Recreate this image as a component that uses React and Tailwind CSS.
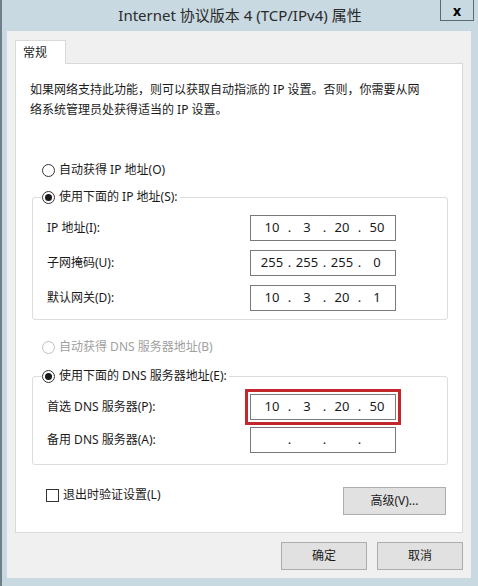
const FONT = { fontFamily: '"Noto Sans", "Noto Sans CJK SC", sans-serif' };

function Radio({ checked, disabled, label }) {
  return (
    <span className={`flex items-center gap-[4px] h-[20px] ${disabled ? 'text-[#a0a0a0]' : 'text-[#1a1a1a]'}`}>
      <span
        className={`flex h-[13px] w-[13px] items-center justify-center rounded-full border bg-white ${
          disabled ? 'border-[#c0c0c0]' : 'border-[#333]'
        }`}
      >
        {checked && <span className="h-[7px] w-[7px] rounded-full bg-[#1a1a1a]" />}
      </span>
      <span>{label}</span>
    </span>
  );
}

function IpInput({ parts, highlight }) {
  return (
    <div
      className={`flex h-[26px] w-[146px] items-center border border-[#7a7a7a] bg-white pl-[6px] text-[13px] text-[#1a1a1a] ${
        highlight ? 'outline-[3px] outline-offset-[2px] outline-solid outline-[#c1272d]' : ''
      }`}
    >
      {parts.map((p, i) => (
        <div key={i} className="flex items-center">
          {i > 0 && <span className="w-[5px] text-center">.</span>}
          <span className="w-[30px] text-center">{p}</span>
        </div>
      ))}
    </div>
  );
}

function Row({ label, parts, highlight, h }) {
  return (
    <div className={`flex items-center ${h}`}>
      <span className="w-[203px] text-[#1a1a1a]">{label}</span>
      <IpInput parts={parts} highlight={highlight} />
    </div>
  );
}

function Button({ children, w = 'w-[86px]' }) {
  return (
    <button
      type="button"
      className={`flex h-[28px] ${w} items-center justify-center border border-[#adadad] bg-[#e1e1e1] text-[12px] text-[#1a1a1a]`}
    >
      {children}
    </button>
  );
}

export default function App() {
  return (
    <div
      className="flex h-[586px] w-[478px] flex-col border-l-2 border-[#6f7f89] bg-[#c8d9e2] text-[12px]"
      style={FONT}
    >
      {/* title bar */}
      <div className="flex h-[31px] items-start">
        <div className="flex h-[31px] flex-1 items-center justify-center pl-[38px] text-[15px] text-[#2b2b2b]">
          Internet 协议版本 4 (TCP/IPv4) 属性
        </div>
        <div className="mr-[4px] flex h-[21px] w-[34px] items-center justify-center border border-t-0 border-[#5a6a74] text-[14px] font-bold text-black">
          x
        </div>
      </div>

      {/* client */}
      <div className="mb-[8px] ml-[5px] mr-[7px] flex flex-1 flex-col bg-[#f0f0f0] px-[8px] pt-[9px]">
        <div className="relative z-10 -mb-px flex h-[24px] w-[51px] items-center border border-b-0 border-[#d9d9d9] bg-white pl-[7px] text-[#1a1a1a]">
          常规
        </div>
        <div className="flex h-[470px] flex-col border border-[#d9d9d9] bg-white px-[14px] pt-[16px]">
          <p className="whitespace-nowrap leading-[20px] text-[#1a1a1a]">
            如果网络支持此功能，则可以获取自动指派的 IP 设置。否则，你需要从网
            <br />
            络系统管理员处获得适当的 IP 设置。
          </p>

          <div className="mt-[40px] pl-[12px]">
            <Radio label="自动获得 IP 地址(O)" />
          </div>

          <fieldset className="ml-[2px] mt-[7px] h-[133px] w-[416px] rounded-[3px] border border-[#dcdcdc]">
            <legend className="ml-[9px] pr-[2px]">
              <Radio checked label="使用下面的 IP 地址(S):" />
            </legend>
            <div className="pl-[14px] pt-[3px]">
              <Row h="h-[35px]" label="IP 地址(I):" parts={['10', '3', '20', '50']} />
              <Row h="h-[35px]" label="子网掩码(U):" parts={['255', '255', '255', '0']} />
              <Row h="h-[35px]" label="默认网关(D):" parts={['10', '3', '20', '1']} />
            </div>
          </fieldset>

          <div className="mt-[17px] pl-[12px]">
            <Radio disabled label="自动获得 DNS 服务器地址(B)" />
          </div>

          <fieldset className="ml-[2px] mt-[9px] h-[99px] w-[416px] rounded-[3px] border border-[#dcdcdc]">
            <legend className="ml-[9px] pr-[2px]">
              <Radio checked label="使用下面的 DNS 服务器地址(E):" />
            </legend>
            <div className="pl-[14px] pt-[4px]">
              <Row h="h-[33px]" label="首选 DNS 服务器(P):" parts={['10', '3', '20', '50']} highlight />
              <Row h="h-[33px]" label="备用 DNS 服务器(A):" parts={['', '', '', '']} />
            </div>
          </fieldset>

          <div className="mt-[22px] flex items-start justify-between pl-[16px] pr-[2px]">
            <label className="mt-[-2px] flex h-[20px] items-center gap-[4px] text-[#1a1a1a]">
              <span className="h-[13px] w-[13px] border border-[#333] bg-white" />
              退出时验证设置(L)
            </label>
            <Button w="w-[103px]">高级(V)...</Button>
          </div>
        </div>

        <div className="mt-[9px] flex justify-end gap-[10px]">
          <Button>确定</Button>
          <Button>取消</Button>
        </div>
      </div>
    </div>
  );
}
